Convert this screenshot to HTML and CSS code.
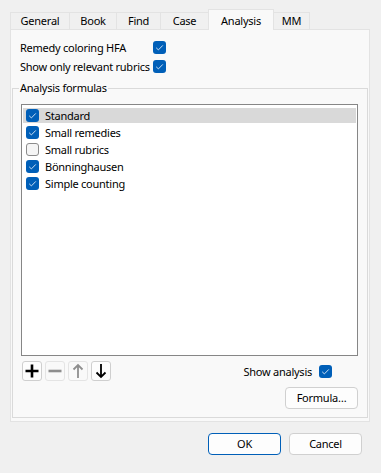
FILE: index.html
```html
<!DOCTYPE html>
<html>
<head>
<meta charset="utf-8">
<link rel="stylesheet" href="styles.css">
</head>
<body>
<div class="dialog">
  <div class="tabs">
    <div class="tab t-general">General</div>
    <div class="tab t-book">Book</div>
    <div class="tab t-find">Find</div>
    <div class="tab t-case">Case</div>
    <div class="tab t-analysis active">Analysis</div>
    <div class="tab t-mm">MM</div>
  </div>
  <div class="pane">
    <div class="opt-row"><span class="opt-label">Remedy coloring HFA</span><span class="cb checked"><svg viewBox="0 0 13 13"><path d="M3.2 6.8 L5.4 8.9 L9.8 4.4"/></svg></span></div>
    <div class="opt-row"><span class="opt-label">Show only relevant rubrics</span><span class="cb checked"><svg viewBox="0 0 13 13"><path d="M3.2 6.8 L5.4 8.9 L9.8 4.4"/></svg></span></div>
    <div class="group">
      <div class="group-title">Analysis formulas</div>
      <div class="listbox">
        <div class="item selected"><span class="cb checked"><svg viewBox="0 0 13 13"><path d="M3.2 6.8 L5.4 8.9 L9.8 4.4"/></svg></span><span>Standard</span></div>
        <div class="item"><span class="cb checked"><svg viewBox="0 0 13 13"><path d="M3.2 6.8 L5.4 8.9 L9.8 4.4"/></svg></span><span>Small remedies</span></div>
        <div class="item"><span class="cb"></span><span>Small rubrics</span></div>
        <div class="item"><span class="cb checked"><svg viewBox="0 0 13 13"><path d="M3.2 6.8 L5.4 8.9 L9.8 4.4"/></svg></span><span>Bönninghausen</span></div>
        <div class="item"><span class="cb checked"><svg viewBox="0 0 13 13"><path d="M3.2 6.8 L5.4 8.9 L9.8 4.4"/></svg></span><span>Simple counting</span></div>
      </div>
      <div class="tools">
        <div class="toolbtns">
          <div class="tbtn"><svg viewBox="0 0 18 18"><path d="M9 2.5 V15.5 M2.5 9 H15.5" class="ico-dark"/></svg></div>
          <div class="tbtn disabled"><svg viewBox="0 0 18 18"><path d="M2.5 9 H15.5" class="ico-grey"/></svg></div>
          <div class="tbtn disabled"><svg viewBox="0 0 18 18"><path d="M9 3 V16 M4.5 7.5 L9 3 L13.5 7.5" class="ico-grey thin"/></svg></div>
          <div class="tbtn"><svg viewBox="0 0 18 18"><path d="M9 2 V15 M4.5 10.5 L9 15 L13.5 10.5" class="ico-dark thin"/></svg></div>
        </div>
        <div class="show"><span>Show analysis</span><span class="cb checked"><svg viewBox="0 0 13 13"><path d="M3.2 6.8 L5.4 8.9 L9.8 4.4"/></svg></span></div>
      </div>
      <div class="formula-row"><div class="btn">Formula…</div></div>
    </div>
  </div>
  <div class="footer">
    <div class="btn default">OK</div>
    <div class="btn">Cancel</div>
  </div>
</div>
</body>
</html>
```
FILE: styles.css
```css
html, body {
  margin: 0;
  padding: 0;
  background: #f0f0f0;
}
body {
  font-family: "Noto Sans", Lato, sans-serif;
  font-size: 11px;
  letter-spacing: -0.25px;
  color: #000;
  width: 381px;
  height: 473px;
  overflow: hidden;
}
.dialog {
  padding: 9px 0 0 10px;
}
.tabs {
  display: flex;
  align-items: flex-end;
  height: 20px;
  position: relative;
  z-index: 1;
}
.tab {
  box-sizing: border-box;
  height: 17px;
  line-height: 16px;
  text-align: center;
  border: 1px solid #e3e3e3;
  border-bottom: none;
  background: #f0f0f0;
  margin-left: -1px;
}
.tab:first-child { margin-left: 0; }
.t-general { width: 60px; }
.t-book { width: 48px; }
.t-find { width: 45px; }
.t-case { width: 49px; }
.t-analysis { width: 66px; }
.t-mm { width: 37px; }
.tab.active {
  height: 21px;
  line-height: 21px;
  background: #f9f9f9;
  margin-bottom: -1px;
  position: relative;
  z-index: 2;
}
.pane {
  box-sizing: border-box;
  width: 360px;
  border: 1px solid #e3e3e3;
  background: #f9f9f9;
  padding: 8px 1px 3px 1px;
}
.opt-row {
  display: flex;
  align-items: center;
  height: 19px;
  padding-left: 8px;
}
.opt-label {
  width: 133px;
  white-space: nowrap;
}
.cb {
  box-sizing: border-box;
  width: 13px;
  height: 13px;
  border-radius: 3px;
  border: 1px solid #8b8b8b;
  background: #f5f5f5;
  flex: none;
  display: inline-block;
}
.cb.checked {
  border: none;
  background: #005fb8;
}
.cb svg {
  display: block;
  width: 13px;
  height: 13px;
}
.cb svg path {
  fill: none;
  stroke: #c9ddf2;
  stroke-width: 1;
}
.group {
  position: relative;
  margin-top: 12px;
  border: 1px solid #dadada;
  padding: 15px 9px 8px 8px;
}
.group-title {
  position: absolute;
  top: -9px;
  left: 6px;
  padding: 0 1px;
  line-height: 16px;
  background: #f9f9f9;
}
.listbox {
  box-sizing: border-box;
  height: 252px;
  border: 1px solid #868686;
  background: #fff;
  padding: 3px 1px;
}
.item {
  display: flex;
  align-items: center;
  height: 15px;
  margin-bottom: 2px;
  padding-left: 3px;
  white-space: nowrap;
}
.item .cb { margin-right: 6px; }
.item.selected { background: #d9d9d9; }
.tools {
  display: flex;
  align-items: center;
  justify-content: space-between;
  margin-top: 5px;
  height: 20px;
}
.toolbtns {
  display: flex;
  gap: 3px;
  padding-left: 1px;
}
.tbtn {
  box-sizing: border-box;
  width: 20px;
  height: 20px;
  border: 1px solid #cfcfcf;
  border-radius: 3px;
  background: #fdfdfd;
}
.tbtn.disabled {
  border-color: #e4e4e4;
  background: #f9f9f9;
}
.tbtn svg {
  display: block;
  width: 18px;
  height: 18px;
}
.ico-dark {
  fill: none;
  stroke: #000;
  stroke-width: 2.6;
}
.ico-grey {
  fill: none;
  stroke: #8e8e8e;
  stroke-width: 2.6;
}
.thin { stroke-width: 1.8; }
.show {
  display: flex;
  align-items: center;
  margin-right: 26px;
  white-space: nowrap;
}
.show .cb { margin-left: 7px; }
.formula-row {
  display: flex;
  justify-content: flex-end;
  margin-top: 6px;
}
.btn {
  box-sizing: border-box;
  width: 73px;
  height: 22px;
  border: 1px solid #d0d0d0;
  border-radius: 4px;
  background: #fdfdfd;
  text-align: center;
  line-height: 20px;
}
.btn.default {
  border-color: #005fb8;
}
.footer {
  display: flex;
  justify-content: flex-end;
  gap: 8px;
  margin-top: 11px;
  padding-right: 19px;
}
```
